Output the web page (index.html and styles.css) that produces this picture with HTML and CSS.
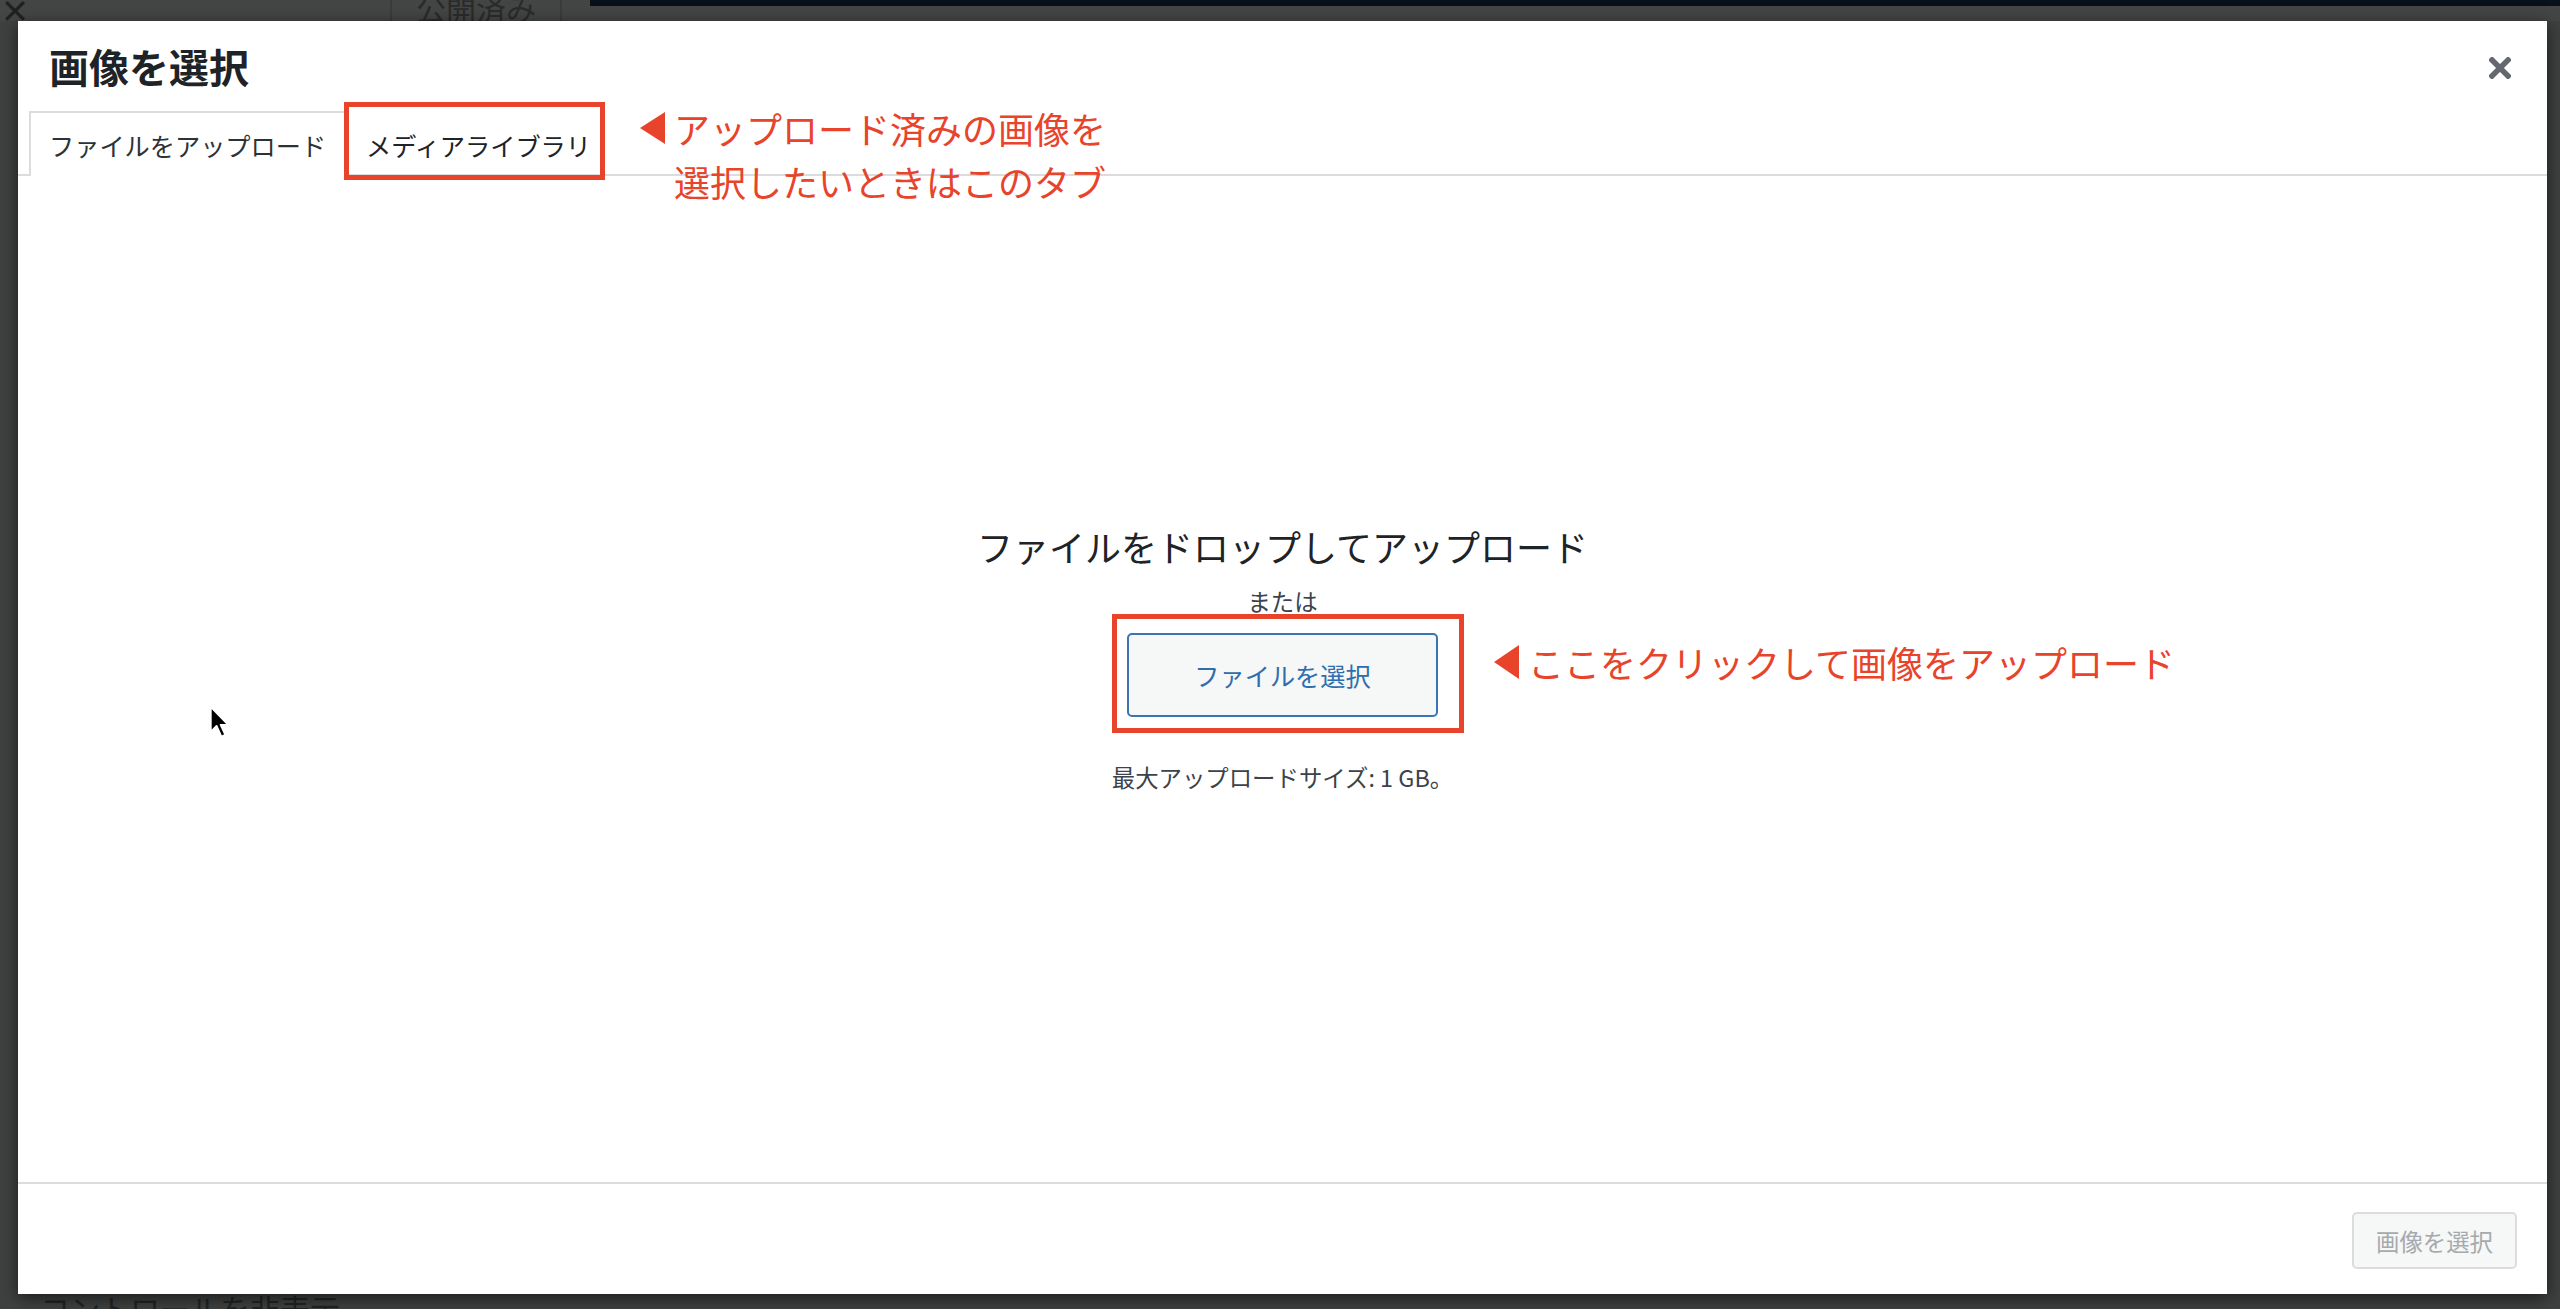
FILE: index.html
```html
<!DOCTYPE html>
<html lang="ja">
<head>
  <meta charset="UTF-8" />
  <title>画像を選択</title>
  <link rel="stylesheet" href="styles.css">
</head>
<body>
  <div class="page">
    <div class="page-top">
      <span class="page-close">×</span>
      <span class="page-status">公開済み</span>
      <div class="page-bar"></div>
    </div>
    <div class="page-side"></div>
    <div class="page-bottom"><span>コントロールを非表示</span></div>
  </div>

  <div class="media-modal">
    <div class="modal-header">
      <h1 class="modal-title">画像を選択</h1>
      <button class="modal-close" aria-label="閉じる">
        <svg width="22" height="22" viewBox="0 0 22 22">
          <path d="M3 3 L19 19 M19 3 L3 19" stroke="#646970" stroke-width="5.5" stroke-linecap="square" fill="none"/>
        </svg>
      </button>
    </div>

    <div class="router">
      <button class="tab active">ファイルをアップロード</button>
      <button class="tab marked">メディアライブラリ</button>
      <div class="note note-tabs">
        <span class="note-arrow"></span>
        <span class="note-text">アップロード済みの画像を<br>選択したいときはこのタブ</span>
      </div>
    </div>

    <div class="content">
      <h2 class="drop-title">ファイルをドロップしてアップロード</h2>
      <p class="drop-or">または</p>
      <div class="select-wrap">
        <button class="select-button">ファイルを選択</button>
        <div class="note note-button">
          <span class="note-arrow"></span>
          <span class="note-text">ここをクリックして画像をアップロード</span>
        </div>
      </div>
      <p class="max-size">最大アップロードサイズ: 1 GB。</p>
    </div>

    <div class="toolbar">
      <button class="toolbar-button" disabled>画像を選択</button>
    </div>
  </div>

  <svg class="cursor" width="21" height="35" viewBox="0 0 18 30">
    <path d="M1.5 1.5 L1.5 23 L6.5 18 L10.5 27 L14 25.5 L10 17 L16.5 17 Z" fill="#000" stroke="#fff" stroke-width="1.6" stroke-linejoin="round"/>
  </svg>
</body>
</html>
```

FILE: styles.css
```css
* {
  margin: 0;
  padding: 0;
  box-sizing: border-box;
}

html,
body {
  width: 2560px;
  height: 1309px;
  overflow: hidden;
}

body {
  position: relative;
  background: #3f4040;
  font-family: "Noto Sans CJK JP", "Noto Sans", sans-serif;
}

/* page underneath the modal */
.page {
  height: 100%;
  display: flex;
  flex-direction: column;
}

.page-top {
  height: 21px;
  display: flex;
  align-items: flex-start;
  overflow: hidden;
  background: #444545;
}

.page-close {
  width: 20px;
  font-size: 30px;
  line-height: 18px;
  color: #1f2020;
  font-weight: 700;
}

.page-status {
  margin-left: 370px;
  padding: 0 24px;
  height: 21px;
  border-left: 2px solid #3a3b3b;
  border-right: 2px solid #3a3b3b;
  font-size: 30px;
  line-height: 14px;
  color: #2a2b2b;
}

.page-bar {
  flex: 1;
  margin-left: 28px;
  height: 6px;
  background: #07111a;
}

.page-side {
  flex: 1;
}

.page-bottom {
  height: 14px;
  overflow: hidden;
  padding-left: 40px;
  font-size: 30px;
  line-height: 26px;
  color: #222323;
}

/* modal */
.media-modal {
  position: absolute;
  top: 21px;
  left: 18px;
  width: 2529px;
  height: 1273px;
  background: #fff;
  display: flex;
  flex-direction: column;
  box-shadow: 0 4px 16px rgba(0, 0, 0, 0.6);
}

.modal-header {
  height: 90px;
  display: flex;
  align-items: center;
  justify-content: space-between;
  padding: 0 36px 0 31px;
}

.modal-title {
  font-size: 40px;
  font-weight: 700;
  color: #1d2327;
  line-height: 90px;
}

.modal-close {
  border: none;
  background: none;
  margin-top: 4px;
  display: flex;
}

.router {
  position: relative;
  height: 65px;
  display: flex;
  padding-left: 11px;
  border-bottom: 2px solid #dcdcde;
}

.tab {
  height: 65px;
  padding: 0 18px;
  border: 2px solid transparent;
  border-bottom: none;
  background: none;
  font-family: inherit;
  font-size: 25.2px;
  color: #1d2327;
  display: flex;
  align-items: center;
}

.tab.active {
  background: #fff;
  border-color: #dcdcde;
  color: #2c3338;
}

.marked {
  position: relative;
}

.marked::after {
  content: "";
  position: absolute;
  top: -11px;
  left: -4px;
  right: 4px;
  bottom: -4px;
  border: 5px solid #e8432b;
}

.note {
  position: absolute;
  display: flex;
  align-items: flex-start;
  gap: 9px;
  color: #e8432b;
  font-size: 36px;
  line-height: 53px;
  white-space: nowrap;
}

.note-arrow {
  width: 0;
  height: 0;
  margin-top: 10px;
  border-top: 16px solid transparent;
  border-bottom: 16px solid transparent;
  border-right: 25px solid #e8432b;
}

.note-tabs {
  left: 622px;
  top: -9px;
}

.content {
  flex: 1;
  display: flex;
  flex-direction: column;
  align-items: center;
  padding-top: 345px;
}

.drop-title {
  font-size: 36px;
  font-weight: 400;
  line-height: 50px;
  color: #1d2327;
}

.drop-or {
  margin-top: 13px;
  font-size: 23.4px;
  line-height: 35px;
  color: #3c434a;
}

.select-wrap {
  position: relative;
  margin-top: 14px;
}

.select-wrap::after {
  content: "";
  position: absolute;
  top: -19px;
  left: -15px;
  right: -26px;
  bottom: -16px;
  border: 5px solid #e8432b;
}

.select-button {
  width: 311px;
  height: 84px;
  border: 2px solid #3a74b1;
  border-radius: 5px;
  background: #f6f7f7;
  color: #2f6eae;
  font-family: inherit;
  font-size: 25.2px;
}

.note-button {
  left: 367px;
  top: 3px;
}

.note-button .note-arrow {
  margin-top: 9px;
  border-top-width: 17px;
  border-bottom-width: 17px;
}

.max-size {
  margin-top: 43px;
  font-size: 23.4px;
  line-height: 35px;
  color: #3c434a;
}

.toolbar {
  height: 112px;
  border-top: 2px solid #dcdcde;
  display: flex;
  justify-content: flex-end;
  align-items: flex-start;
  padding: 28px 30px 0 0;
}

.toolbar-button {
  height: 57px;
  padding: 0 22px;
  border: 2px solid #dcdcde;
  border-radius: 5px;
  background: #f6f7f7;
  color: #a7aaad;
  font-family: inherit;
  font-size: 23.4px;
}

.cursor {
  position: absolute;
  left: 209px;
  top: 705px;
}
```
